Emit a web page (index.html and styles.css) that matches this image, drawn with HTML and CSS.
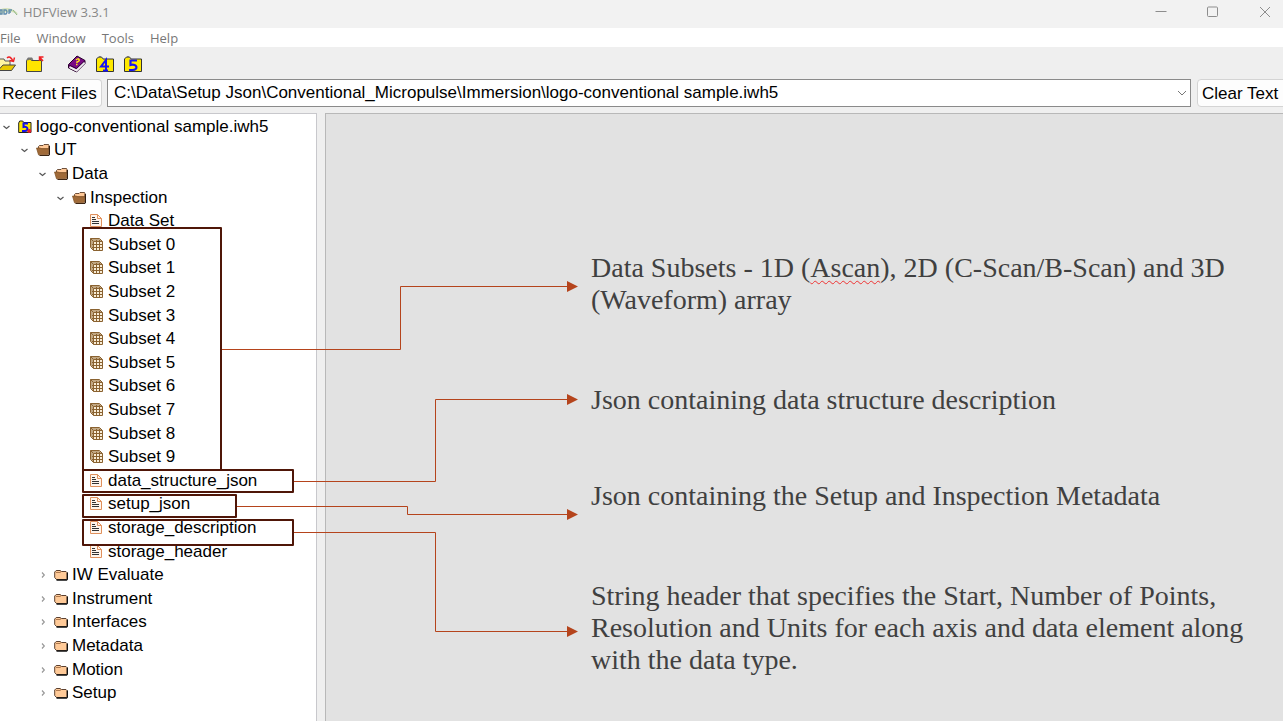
FILE: index.html
```html
<!DOCTYPE html>
<html lang="en">
<head>
<meta charset="utf-8">
<title>HDFView 3.3.1</title>
<link rel="stylesheet" href="styles.css">
</head>
<body>
<svg class="defs" aria-hidden="true">
  <symbol id="down" viewBox="0 0 10 10"><path d="M1.500 4l3 2.500 3-2.500" fill="none" stroke="#555" stroke-width="1.200"/></symbol>
  <symbol id="right" viewBox="0 0 10 10"><path d="M4 2.500L6.300 5 4 7.500" fill="none" stroke="#999" stroke-width="1.200"/></symbol>
  <symbol id="open" viewBox="0 0 14 14"><path d="M2.500 5V3.500l1-1H7l1-1h4.500l.5.500v4H2.500z" fill="#ffc896" stroke="#4a2c18" stroke-width=".8"/><path d="M3.500 12.500h9l.9-1V3" fill="none" stroke="#2d1b10" stroke-width="1.200"/><path d="M.5 5h4l.7.700h7.300V11l-.8.800H2.500z" fill="#a06a38" stroke="#7c4d20" stroke-width=".7"/></symbol>
  <symbol id="closed" viewBox="0 0 14 14"><path d="M.7 9.500V4l1.500-1.500H6L7.500 3.500H12l1 1v6l-1 1H2.500z" fill="#ffca98" stroke="#5b4030"/><path d="M2 4.500h4L7.500 3.500" fill="none" stroke="#9b653a" stroke-width=".8"/><path d="M2.500 12h10l1-1V4.500" fill="none" stroke="#111" stroke-width="1.300"/></symbol>
  <symbol id="doc" viewBox="0 0 14 14"><path d="M.5.500h7l4 4v8H.5z" fill="#fff5ec" stroke="#e0905c"/><path d="M7.500.500v4h4" fill="none" stroke="#e0905c"/><path d="M2 3.500h3M2 5.500h4M2 7.500h7M2 9.500h7" stroke="#333"/></symbol>
  <symbol id="grid" viewBox="0 0 14 14"><path d="M.5 9.500v-9h9l3 3v9h-9z" fill="#f8ecd6" stroke="#8a6230"/><path d="M.5.500l3 3h9M3.500 3.500v9M6.500 2v10.500M9.500 2v10.500M2 6.500h10.500M2 9.500h10.500M2 2h9M2 2v9" fill="none" stroke="#8a6230"/></symbol>
  <symbol id="h5" viewBox="0 0 14 14"><path d="M.7 12.500V3l1-2h3l1 1.500H13v10z" fill="#ffe900" stroke="#222"/><path d="M10 3.500H5.500V7c5-1 5 4 1.500 4H4" fill="none" stroke="#1511ef" stroke-width="2"/><circle cx="11.300" cy="11" r="2" fill="#e51d26"/></symbol>
</svg>
<div class="app">
  <header class="titlebar">
    <svg class="logo" viewBox="0 0 18 12" aria-hidden="true"><path d="M0 3.500q9-4 17 3l1 2Q9 3 0 9z" fill="#d6e2ba"/><path d="M0 4v4h2V4zm4 0v4h2q2-2 0-4zM9 8V4h3M9 6h2" fill="none" stroke="#5f8cae" stroke-width="1.300"/><path d="M13 4l4 5" stroke="#8db486"/></svg>
    <span class="title">HDFView 3.3.1</span>
    <div class="controls">
      <button aria-label="Minimize"><svg viewBox="0 0 12 12"><path d="M.5 5.500h11"/></svg></button>
      <button aria-label="Maximize"><svg viewBox="0 0 12 12"><rect x=".5" y="1" width="10" height="9.500" rx="1"/></svg></button>
      <button aria-label="Close"><svg viewBox="0 0 12 12"><path d="M1 1l10 10M11 1l-10 10"/></svg></button>
    </div>
  </header>
  <nav class="menu"><button>File</button><button>Window</button><button>Tools</button><button>Help</button></nav>
  <div class="toolbar">
    <button aria-label="Open"><svg viewBox="0 0 20 18"><path d="M1 15V6l2-2h4l1 2h5v4" fill="#fff5a0" stroke="#555"/><path d="M1 15.500L6 10h12.500l-4 5.500z" fill="#e8c900" stroke="#444"/><path d="M10 3q3-3 6 3M12.500 5.500l4 1 1-4" fill="none" stroke="#ef1f23" stroke-width="1.400"/></svg></button>
    <button aria-label="Close file"><svg viewBox="0 0 20 18"><path d="M1.500 16.500V6l1-2h3l1 1.500h10v11z" fill="#ffe500" stroke="#444"/><path d="M2.500 5l1-1.500h3l1 1.500" fill="none" stroke="#777" stroke-width="2"/><path d="M14.500 6V2h4M14.500 2l3.500 4" fill="none" stroke="#ef1f23" stroke-width="1.500"/></svg></button>
    <button class="help" aria-label="User guide"><svg viewBox="0 0 20 18"><path d="M1.500 9.500L10 1l8 4.500v3L9.500 17l-8-4z" fill="#790b85" stroke="#260029"/><path d="M2.500 12l7 3.500L17.500 7.500" fill="none" stroke="#eee" stroke-width="2"/><path d="M9 5q2-2 3-.5t-2 2.500v1M9 9.500h1.500" fill="none" stroke="#ffe21e" stroke-width="1.500"/><path d="M2 10l7.500 3.500L18 5.500" fill="none" stroke="#310038"/></svg></button>
    <button aria-label="HDF4 library"><svg viewBox="0 0 20 18"><path d="M1.500 16.500V4l2-2h3L8 4h10.500v12.500z" fill="#ffe900" stroke="#333"/><path d="M3 3q2-3 5 1" fill="none" stroke="#666"/><path d="M11 16V5L6 11.500h8M8 15.500h5" fill="none" stroke="#1714f1" stroke-width="2"/></svg></button>
    <button aria-label="HDF5 library"><svg viewBox="0 0 20 18"><path d="M1.500 16.500V4l2-2h3L8 4h10.500v12.500z" fill="#ffe900" stroke="#333"/><path d="M3 3q2-3 5 1" fill="none" stroke="#666"/><path d="M14 5.500H7.500V10c7-2 8 5 2 5H6" fill="none" stroke="#1714f1" stroke-width="2.200"/></svg></button>
  </div>
  <div class="pathbar">
    <button class="recent">Recent Files</button>
    <div class="combo">
      <select aria-label="File path"><option>C:\Data\Setup Json\Conventional_Micropulse\Immersion\logo-conventional sample.iwh5</option></select>
      <svg viewBox="0 0 10 10" aria-hidden="true"><path d="M1 3l4 4 4-4" fill="none" stroke="#777"/></svg>
    </div>
    <button class="clear">Clear Text</button>
  </div>
  <main class="workspace">
    <ul class="tree">
      <li class="d0"><svg><use href="#down"/></svg><svg class="ico"><use href="#h5"/></svg>logo-conventional sample.iwh5</li>
      <li class="d1"><svg><use href="#down"/></svg><svg class="ico"><use href="#open"/></svg>UT</li>
      <li class="d2"><svg><use href="#down"/></svg><svg class="ico"><use href="#open"/></svg>Data</li>
      <li class="d3"><svg><use href="#down"/></svg><svg class="ico"><use href="#open"/></svg>Inspection</li>
      <li class="d4"><svg class="ico"><use href="#doc"/></svg>Data Set</li>
      <li class="d4"><svg class="ico"><use href="#grid"/></svg>Subset 0</li>
      <li class="d4"><svg class="ico"><use href="#grid"/></svg>Subset 1</li>
      <li class="d4"><svg class="ico"><use href="#grid"/></svg>Subset 2</li>
      <li class="d4"><svg class="ico"><use href="#grid"/></svg>Subset 3</li>
      <li class="d4"><svg class="ico"><use href="#grid"/></svg>Subset 4</li>
      <li class="d4"><svg class="ico"><use href="#grid"/></svg>Subset 5</li>
      <li class="d4"><svg class="ico"><use href="#grid"/></svg>Subset 6</li>
      <li class="d4"><svg class="ico"><use href="#grid"/></svg>Subset 7</li>
      <li class="d4"><svg class="ico"><use href="#grid"/></svg>Subset 8</li>
      <li class="d4"><svg class="ico"><use href="#grid"/></svg>Subset 9</li>
      <li class="d4"><svg class="ico"><use href="#doc"/></svg>data_structure_json</li>
      <li class="d4"><svg class="ico"><use href="#doc"/></svg>setup_json</li>
      <li class="d4"><svg class="ico"><use href="#doc"/></svg>storage_description</li>
      <li class="d4"><svg class="ico"><use href="#doc"/></svg>storage_header</li>
      <li class="d2"><svg><use href="#right"/></svg><svg class="ico"><use href="#closed"/></svg>IW Evaluate</li>
      <li class="d2"><svg><use href="#right"/></svg><svg class="ico"><use href="#closed"/></svg>Instrument</li>
      <li class="d2"><svg><use href="#right"/></svg><svg class="ico"><use href="#closed"/></svg>Interfaces</li>
      <li class="d2"><svg><use href="#right"/></svg><svg class="ico"><use href="#closed"/></svg>Metadata</li>
      <li class="d2"><svg><use href="#right"/></svg><svg class="ico"><use href="#closed"/></svg>Motion</li>
      <li class="d2"><svg><use href="#right"/></svg><svg class="ico"><use href="#closed"/></svg>Setup</li>
    </ul>
    <section class="notes">
      <p>Data Subsets - 1D (<span class="typo">Ascan</span>), 2D (C-Scan/B-Scan) and 3D<br>(Waveform) array</p>
      <p class="structure">Json containing data structure description</p>
      <p>Json containing the Setup and Inspection Metadata</p>
      <p>String header that specifies the Start, Number of Points,<br>Resolution and Units for each axis and data element along<br>with the data type.</p>
    </section>
  </main>
  <svg class="callouts" viewBox="0 0 600 721" aria-hidden="true">
    <g fill="none" stroke="#4f1608" stroke-width="2" stroke-linejoin="round">
      <path d="M83 228h138v242H83z"/><path d="M83 470h210v22H83z"/><path d="M83 495h153v22H83z"/><path d="M83 520h210v25H83z"/>
    </g>
    <g fill="none" stroke="#b5441c">
      <path d="M222 349.500h178.500v-63H568"/><path d="M294 481.500h141.500v-82H568"/><path d="M237 506.500h170.500v8H568"/><path d="M294 532.500h141.500v99H568"/>
    </g>
    <path fill="#b5441c" d="M567 281l11 5.500-11 5.500zM567 394l11 5.500-11 5.500zM567 509l11 5.500-11 5.500zM567 626l11 5.500-11 5.500z"/>
  </svg>
</div>
</body>
</html>
```
FILE: styles.css
```css
* { box-sizing: border-box; }
body { margin: 0; font-family: "Liberation Sans", Arial, sans-serif; font-size: 17px; color: #000; background: #efefef; }
button { margin: 0; padding: 0; border: 0; background: none; font: inherit; color: inherit; white-space: nowrap; }
.defs { position: absolute; width: 0; height: 0; }
.app { position: relative; display: flex; flex-direction: column; min-height: 100vh; overflow: hidden; }

.titlebar { display: flex; align-items: center; height: 28px; padding-bottom: 4px; background: #f2f2f2; color: #888; font-family: "Open Sans", sans-serif; font-size: 13px; }
.logo { width: 18px; height: 12px; margin-right: 5px; }
.title { flex: 1; }
.controls { display: flex; gap: 40px; padding-right: 12px; }
.controls button { display: flex; }
.controls svg { width: 12px; height: 12px; fill: none; stroke: #8d8d8d; }

.menu { display: flex; gap: 16px; height: 19px; background: #fff; color: #777; font-family: "Open Sans", sans-serif; font-size: 13px; line-height: 20px; }

.toolbar { display: flex; align-items: center; gap: 8px; height: 32px; padding-top: 2px; }
.toolbar button { display: flex; }
.toolbar button:first-child { margin-left: -3px; }
.toolbar .help { margin-left: 14px; }
.toolbar svg { width: 20px; height: 18px; }

.pathbar { display: flex; height: 34px; margin-right: -8px; }
.pathbar button { height: 28px; border: 1px solid #d4d4d4; border-radius: 4px; background: #fdfdfd; }
.pathbar .recent { width: 102px; padding: 2px 4px 0 2px; border-left: 0; border-radius: 0 4px 4px 0; }
.pathbar .clear { width: 94px; padding: 2px 4px 0; text-align: left; }
.combo { position: relative; flex: 1; margin: 0 6px 0 5px; }
.combo select { width: 100%; height: 28px; padding: 0 24px 2px 6px; border: 1px solid #8a8a8a; border-radius: 0; background: #fff; font: inherit; color: inherit; appearance: none; }
.combo svg { position: absolute; top: 9px; right: 4px; width: 10px; height: 10px; }

.workspace { display: flex; flex: 1; gap: 8px; }
.tree { display: grid; grid-auto-rows: 1fr; align-self: stretch; width: 317px; min-height: 608px; margin: 0; padding: 1px 0 16px; list-style: none; background: #fff; border: solid #c8c8cc; border-width: 1px 1px 0 0; }
.tree li { display: flex; align-items: center; white-space: nowrap; }
.tree svg { flex: none; width: 10px; height: 10px; margin-right: 6px; }
.tree .ico { width: 14px; height: 14px; margin-right: 4px; }
.d0 { padding-left: 2px; }
.d1 { padding-left: 20px; }
.d2 { padding-left: 38px; }
.d3 { padding-left: 56px; }
.d4 { padding-left: 90px; }

.notes { display: flex; flex: 1; flex-direction: column; gap: 68px; padding: 138px 16px 40px 265px; border: solid #b8b8b8; border-width: 1px 0 0 1px; background: #e2e2e2; color: #404040; font-family: "Liberation Serif", "Times New Roman", serif; font-size: 28px; line-height: 32px; white-space: nowrap; }
.notes p { margin: 0; }
.notes .structure { margin-bottom: -4px; }
.typo { text-decoration: underline wavy #e33 1px; text-underline-offset: 3px; }

.callouts { position: absolute; top: 0; left: 0; width: 600px; height: 721px; pointer-events: none; }
```
